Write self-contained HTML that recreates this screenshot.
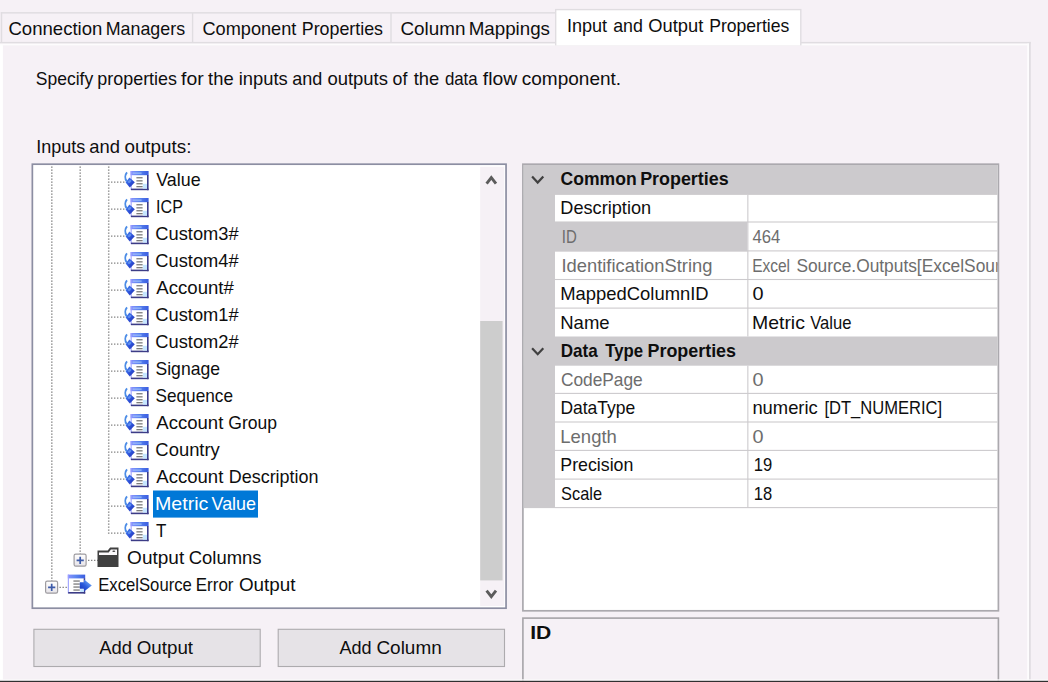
<!DOCTYPE html>
<html><head><meta charset="utf-8"><title>Advanced Editor</title>
<style>
html,body{margin:0;padding:0;background:#F6F1F6;overflow:hidden}
svg{display:block;font-family:"Liberation Sans",sans-serif}
</style></head><body>
<svg width="1048" height="682" viewBox="0 0 1048 682">
<defs>
<linearGradient id="tb" x1="0" y1="0" x2="1" y2="0"><stop offset="0" stop-color="#8C92FF"/><stop offset="0.45" stop-color="#5C86F0"/><stop offset="1" stop-color="#3A5CE0"/></linearGradient>
<linearGradient id="ar" x1="0" y1="0" x2="1" y2="1"><stop offset="0" stop-color="#4C8CF0"/><stop offset="0.55" stop-color="#2C50D8"/><stop offset="1" stop-color="#2430A8"/></linearGradient>
<linearGradient id="ar2" x1="0" y1="1" x2="1" y2="0"><stop offset="0" stop-color="#1430B8"/><stop offset="0.45" stop-color="#2C5CDC"/><stop offset="0.8" stop-color="#68A0F4"/><stop offset="1" stop-color="#4C88EC"/></linearGradient>
<linearGradient id="pb" x1="0" y1="0" x2="0" y2="1"><stop offset="0" stop-color="#FFFFFF"/><stop offset="1" stop-color="#E6E3E8"/></linearGradient>
<g id="col">
 <rect x="6.6" y="0" width="18" height="19.2" fill="#FFFFFF"/>
 <rect x="6.6" y="0" width="18" height="4.2" fill="url(#tb)"/>
 <rect x="6.6" y="0" width="1.1" height="19" fill="#9CA0FF"/>
 <rect x="23" y="4" width="1.6" height="15.2" fill="#3A3A8A"/>
 <rect x="7" y="17.6" width="17.6" height="1.6" fill="#3C3C86"/>
 <rect x="18.8" y="12.8" width="4.2" height="4.8" fill="#C6E6FF"/>
 <rect x="8.6" y="1.5" width="9" height="1.3" fill="#A4C4FA" opacity="0.8"/>
 <rect x="12.4" y="6.1" width="6.2" height="1.3" fill="#7C7C7C"/>
 <rect x="12.4" y="9.2" width="6.2" height="1.3" fill="#7C7C7C"/>
 <rect x="12.4" y="12.1" width="6.2" height="1.3" fill="#7C7C7C"/>
 <rect x="12.4" y="15.0" width="6.2" height="1.3" fill="#7C7C7C"/>
 <path d="M3.0,1.4 C0.9,3.8 0.7,7.6 2.8,10.4" fill="none" stroke="#4C8CE6" stroke-width="1.9"/>
 <polygon points="5.4,6.5 10.8,11.3 5.8,16.5 1.6,11.4" fill="url(#ar)"/>
 <ellipse cx="5.6" cy="10.4" rx="2.0" ry="1.2" transform="rotate(-35 5.6 10.4)" fill="#6C9CF4" opacity="0.75"/>
</g>
<g id="err">
 <rect x="0" y="0" width="17.4" height="19" fill="#FFFFFF"/>
 <rect x="0" y="0" width="17.4" height="3.8" fill="url(#tb)"/>
 <rect x="0" y="0" width="1.1" height="18.8" fill="#9CA0FF"/>
 <rect x="15.9" y="3.6" width="1.5" height="15.4" fill="#3A3A8A"/>
 <rect x="0.4" y="17.4" width="17" height="1.6" fill="#3C3C86"/>
 <rect x="12.4" y="14.6" width="3.5" height="2.8" fill="#BFE4FF"/>
 <rect x="5.6" y="5.8" width="6.4" height="1.3" fill="#7C7C7C"/>
 <rect x="5.6" y="8.8" width="6.4" height="1.3" fill="#7C7C7C"/>
 <rect x="5.6" y="11.8" width="6.4" height="1.3" fill="#7C7C7C"/>
 <rect x="5.6" y="14.8" width="6.4" height="1.3" fill="#7C7C7C"/>
 <polygon points="12.0,7.6 16.2,7.6 16.2,5.0 24.0,10.9 16.2,16.8 16.2,14.2 12.0,14.2" fill="url(#ar2)"/>
</g>
<g id="plus">
 <rect x="0.5" y="0.5" width="12" height="12" rx="1.6" fill="url(#pb)" stroke="#9E9CA0" stroke-width="1.2"/>
 <path d="M3,6.6 H10.2 M6.6,3 V10.2" stroke="#3D5BA9" stroke-width="1.7" fill="none"/>
</g>
<g id="folder">
 <path d="M0,3.2 L10.2,3.2 L12.6,0 L21,0 L21,19.5 L0,19.5 Z" fill="#404040"/>
 <path d="M1.5,5.0 L11.2,5.0 L13.4,2.0 L19.5,2.0 L19.5,7.6 L1.5,7.6 Z" fill="#FBF9FB"/>
 <ellipse cx="16.3" cy="3.9" rx="1.5" ry="0.8" fill="#404040"/>
</g>
<clipPath id="valclip"><rect x="748" y="165" width="249.6" height="345"/></clipPath>
</defs>
<rect x="0.00" y="0.00" width="1048.00" height="682.00" fill="#F6F1F6"/>
<rect x="0.00" y="45.00" width="2.90" height="635.00" fill="#FFFFFF"/>
<rect x="0.00" y="41.90" width="1030.80" height="1.70" fill="#E0DDE1"/>
<rect x="0.00" y="43.60" width="1029.00" height="1.80" fill="#FDFCFD"/>
<rect x="1027.20" y="43.60" width="1.80" height="636.40" fill="#FDFCFD"/>
<rect x="1029.00" y="41.90" width="1.80" height="638.10" fill="#E0DDE1"/>
<rect x="0.80" y="12.10" width="555.20" height="1.50" fill="#E0DDE1"/>
<rect x="0.80" y="12.10" width="1.40" height="30.40" fill="#E0DDE1"/>
<rect x="191.90" y="13.00" width="1.40" height="29.50" fill="#E0DDE1"/>
<rect x="390.30" y="13.00" width="1.40" height="29.50" fill="#E0DDE1"/>
<rect x="555.00" y="8.90" width="246.50" height="36.50" fill="#E0DDE1"/>
<rect x="556.40" y="10.30" width="243.70" height="35.10" fill="#FFFFFF"/>
<text x="8.46" y="34.80" textLength="93.95" lengthAdjust="spacingAndGlyphs" font-size="18.50" fill="#0E0E0E">Connection</text>
<text x="105.74" y="34.80" textLength="79.31" lengthAdjust="spacingAndGlyphs" font-size="18.50" fill="#0E0E0E">Managers</text>
<text x="202.48" y="34.80" textLength="93.85" lengthAdjust="spacingAndGlyphs" font-size="18.50" fill="#0E0E0E">Component</text>
<text x="301.74" y="34.80" textLength="81.31" lengthAdjust="spacingAndGlyphs" font-size="18.50" fill="#0E0E0E">Properties</text>
<text x="400.44" y="34.80" textLength="64.98" lengthAdjust="spacingAndGlyphs" font-size="18.50" fill="#0E0E0E">Column</text>
<text x="468.66" y="34.80" textLength="81.32" lengthAdjust="spacingAndGlyphs" font-size="18.50" fill="#0E0E0E">Mappings</text>
<text x="566.93" y="31.90" textLength="40.20" lengthAdjust="spacingAndGlyphs" font-size="18.50" fill="#0E0E0E">Input</text>
<text x="613.14" y="31.90" textLength="29.70" lengthAdjust="spacingAndGlyphs" font-size="18.50" fill="#0E0E0E">and</text>
<text x="648.33" y="31.90" textLength="55.00" lengthAdjust="spacingAndGlyphs" font-size="18.50" fill="#0E0E0E">Output</text>
<text x="709.16" y="31.90" textLength="80.18" lengthAdjust="spacingAndGlyphs" font-size="18.50" fill="#0E0E0E">Properties</text>
<text x="35.81" y="84.60" textLength="57.33" lengthAdjust="spacingAndGlyphs" font-size="18.50" fill="#0E0E0E">Specify</text>
<text x="97.35" y="84.60" textLength="79.60" lengthAdjust="spacingAndGlyphs" font-size="18.50" fill="#0E0E0E">properties</text>
<text x="181.03" y="84.60" textLength="22.60" lengthAdjust="spacingAndGlyphs" font-size="18.50" fill="#0E0E0E">for</text>
<text x="208.12" y="84.60" textLength="25.49" lengthAdjust="spacingAndGlyphs" font-size="18.50" fill="#0E0E0E">the</text>
<text x="238.77" y="84.60" textLength="48.99" lengthAdjust="spacingAndGlyphs" font-size="18.50" fill="#0E0E0E">inputs</text>
<text x="292.34" y="84.60" textLength="30.02" lengthAdjust="spacingAndGlyphs" font-size="18.50" fill="#0E0E0E">and</text>
<text x="327.42" y="84.60" textLength="60.54" lengthAdjust="spacingAndGlyphs" font-size="18.50" fill="#0E0E0E">outputs</text>
<text x="392.55" y="84.60" textLength="14.82" lengthAdjust="spacingAndGlyphs" font-size="18.50" fill="#0E0E0E">of</text>
<text x="413.72" y="84.60" textLength="25.49" lengthAdjust="spacingAndGlyphs" font-size="18.50" fill="#0E0E0E">the</text>
<text x="444.89" y="84.60" textLength="32.81" lengthAdjust="spacingAndGlyphs" font-size="18.50" fill="#0E0E0E">data</text>
<text x="482.83" y="84.60" textLength="34.33" lengthAdjust="spacingAndGlyphs" font-size="18.50" fill="#0E0E0E">flow</text>
<text x="521.79" y="84.60" textLength="99.34" lengthAdjust="spacingAndGlyphs" font-size="18.50" fill="#0E0E0E">component.</text>
<text x="36.34" y="153.10" textLength="49.01" lengthAdjust="spacingAndGlyphs" font-size="18.50" fill="#0E0E0E">Inputs</text>
<text x="89.32" y="153.10" textLength="30.67" lengthAdjust="spacingAndGlyphs" font-size="18.50" fill="#0E0E0E">and</text>
<text x="124.41" y="153.10" textLength="67.01" lengthAdjust="spacingAndGlyphs" font-size="18.50" fill="#0E0E0E">outputs:</text>
<rect x="32.35" y="164.2" width="473.7" height="444.0" fill="#FFFFFF" stroke="#8C8EA2" stroke-width="1.7"/>
<rect x="480.20" y="166.80" width="24.00" height="439.20" fill="#F6F1F6"/>
<rect x="480.20" y="321.00" width="22.40" height="259.40" fill="#CDCDCD"/>
<path d="M486.6,183.6 L491.3,177.6 L496,183.6" fill="none" stroke="#5C5C5C" stroke-width="2.9"/>
<path d="M486.6,590.6 L491.3,596.6 L496,590.6" fill="none" stroke="#5C5C5C" stroke-width="2.9"/>
<line x1="51.80" y1="166.40" x2="51.80" y2="581.00" stroke="#848484" stroke-width="1.50" stroke-dasharray="1.3 1.7"/>
<line x1="80.20" y1="166.40" x2="80.20" y2="554.00" stroke="#848484" stroke-width="1.50" stroke-dasharray="1.3 1.7"/>
<line x1="108.70" y1="166.40" x2="108.70" y2="534.20" stroke="#848484" stroke-width="1.50" stroke-dasharray="1.3 1.7"/>
<line x1="111.00" y1="182.10" x2="124.60" y2="182.10" stroke="#848484" stroke-width="1.30" stroke-dasharray="1.4 1.6"/>
<use href="#col" x="124" y="171.00"/>
<text x="156.22" y="186.00" textLength="44.35" lengthAdjust="spacingAndGlyphs" font-size="18.50" fill="#0E0E0E">Value</text>
<line x1="111.00" y1="209.10" x2="124.60" y2="209.10" stroke="#848484" stroke-width="1.30" stroke-dasharray="1.4 1.6"/>
<use href="#col" x="124" y="198.00"/>
<text x="156.11" y="213.00" textLength="26.83" lengthAdjust="spacingAndGlyphs" font-size="18.50" fill="#0E0E0E">ICP</text>
<line x1="111.00" y1="236.10" x2="124.60" y2="236.10" stroke="#848484" stroke-width="1.30" stroke-dasharray="1.4 1.6"/>
<use href="#col" x="124" y="225.00"/>
<text x="155.37" y="240.00" textLength="83.32" lengthAdjust="spacingAndGlyphs" font-size="18.50" fill="#0E0E0E">Custom3#</text>
<line x1="111.00" y1="263.10" x2="124.60" y2="263.10" stroke="#848484" stroke-width="1.30" stroke-dasharray="1.4 1.6"/>
<use href="#col" x="124" y="252.00"/>
<text x="155.37" y="267.00" textLength="83.32" lengthAdjust="spacingAndGlyphs" font-size="18.50" fill="#0E0E0E">Custom4#</text>
<line x1="111.00" y1="290.10" x2="124.60" y2="290.10" stroke="#848484" stroke-width="1.30" stroke-dasharray="1.4 1.6"/>
<use href="#col" x="124" y="279.00"/>
<text x="156.26" y="294.00" textLength="77.63" lengthAdjust="spacingAndGlyphs" font-size="18.50" fill="#0E0E0E">Account#</text>
<line x1="111.00" y1="317.10" x2="124.60" y2="317.10" stroke="#848484" stroke-width="1.30" stroke-dasharray="1.4 1.6"/>
<use href="#col" x="124" y="306.00"/>
<text x="155.37" y="321.00" textLength="83.32" lengthAdjust="spacingAndGlyphs" font-size="18.50" fill="#0E0E0E">Custom1#</text>
<line x1="111.00" y1="344.10" x2="124.60" y2="344.10" stroke="#848484" stroke-width="1.30" stroke-dasharray="1.4 1.6"/>
<use href="#col" x="124" y="333.00"/>
<text x="155.37" y="348.00" textLength="83.32" lengthAdjust="spacingAndGlyphs" font-size="18.50" fill="#0E0E0E">Custom2#</text>
<line x1="111.00" y1="371.10" x2="124.60" y2="371.10" stroke="#848484" stroke-width="1.30" stroke-dasharray="1.4 1.6"/>
<use href="#col" x="124" y="360.00"/>
<text x="155.50" y="375.00" textLength="64.48" lengthAdjust="spacingAndGlyphs" font-size="18.50" fill="#0E0E0E">Signage</text>
<line x1="111.00" y1="398.10" x2="124.60" y2="398.10" stroke="#848484" stroke-width="1.30" stroke-dasharray="1.4 1.6"/>
<use href="#col" x="124" y="387.00"/>
<text x="155.52" y="402.00" textLength="77.44" lengthAdjust="spacingAndGlyphs" font-size="18.50" fill="#0E0E0E">Sequence</text>
<line x1="111.00" y1="425.10" x2="124.60" y2="425.10" stroke="#848484" stroke-width="1.30" stroke-dasharray="1.4 1.6"/>
<use href="#col" x="124" y="414.00"/>
<text x="156.26" y="429.00" textLength="67.07" lengthAdjust="spacingAndGlyphs" font-size="18.50" fill="#0E0E0E">Account</text>
<text x="228.32" y="429.00" textLength="48.72" lengthAdjust="spacingAndGlyphs" font-size="18.50" fill="#0E0E0E">Group</text>
<line x1="111.00" y1="452.10" x2="124.60" y2="452.10" stroke="#848484" stroke-width="1.30" stroke-dasharray="1.4 1.6"/>
<use href="#col" x="124" y="441.00"/>
<text x="155.36" y="456.00" textLength="64.47" lengthAdjust="spacingAndGlyphs" font-size="18.50" fill="#0E0E0E">Country</text>
<line x1="111.00" y1="479.10" x2="124.60" y2="479.10" stroke="#848484" stroke-width="1.30" stroke-dasharray="1.4 1.6"/>
<use href="#col" x="124" y="468.00"/>
<text x="156.26" y="483.00" textLength="67.07" lengthAdjust="spacingAndGlyphs" font-size="18.50" fill="#0E0E0E">Account</text>
<text x="228.73" y="483.00" textLength="89.84" lengthAdjust="spacingAndGlyphs" font-size="18.50" fill="#0E0E0E">Description</text>
<line x1="111.00" y1="506.10" x2="124.60" y2="506.10" stroke="#848484" stroke-width="1.30" stroke-dasharray="1.4 1.6"/>
<use href="#col" x="124" y="495.00"/>
<rect x="153.00" y="490.50" width="105.00" height="27.10" fill="#0078D7"/>
<text x="154.99" y="510.00" textLength="53.32" lengthAdjust="spacingAndGlyphs" font-size="18.50" fill="#FFFFFF">Metric</text>
<text x="211.52" y="510.00" textLength="44.55" lengthAdjust="spacingAndGlyphs" font-size="18.50" fill="#FFFFFF">Value</text>
<line x1="111.00" y1="533.10" x2="124.60" y2="533.10" stroke="#848484" stroke-width="1.30" stroke-dasharray="1.4 1.6"/>
<use href="#col" x="124" y="522.00"/>
<text x="156.02" y="537.00" textLength="10.37" lengthAdjust="spacingAndGlyphs" font-size="18.50" fill="#0E0E0E">T</text>
<line x1="88.00" y1="560.30" x2="98.00" y2="560.30" stroke="#848484" stroke-width="1.30" stroke-dasharray="1.4 1.6"/>
<use href="#plus" x="73.6" y="553.7"/>
<use href="#folder" x="97.5" y="547.4"/>
<text x="127.10" y="563.90" textLength="57.14" lengthAdjust="spacingAndGlyphs" font-size="18.50" fill="#0E0E0E">Output</text>
<text x="188.76" y="563.90" textLength="72.80" lengthAdjust="spacingAndGlyphs" font-size="18.50" fill="#0E0E0E">Columns</text>
<line x1="59.50" y1="587.30" x2="68.00" y2="587.30" stroke="#848484" stroke-width="1.30" stroke-dasharray="1.4 1.6"/>
<use href="#plus" x="45.1" y="580.7"/>
<use href="#err" x="67.8" y="574.6"/>
<text x="98.23" y="590.90" textLength="93.61" lengthAdjust="spacingAndGlyphs" font-size="18.50" fill="#0E0E0E">ExcelSource</text>
<text x="195.81" y="590.90" textLength="37.67" lengthAdjust="spacingAndGlyphs" font-size="18.50" fill="#0E0E0E">Error</text>
<text x="238.91" y="590.90" textLength="56.63" lengthAdjust="spacingAndGlyphs" font-size="18.50" fill="#0E0E0E">Output</text>
<rect x="33.9" y="629.3" width="226.3" height="37.2" fill="#E6E3E7" stroke="#ADABAE" stroke-width="1.1"/>
<rect x="278.2" y="629.3" width="226.3" height="37.2" fill="#E6E3E7" stroke="#ADABAE" stroke-width="1.1"/>
<text x="99.36" y="654.10" textLength="32.72" lengthAdjust="spacingAndGlyphs" font-size="18.50" fill="#0E0E0E">Add</text>
<text x="136.71" y="654.10" textLength="56.33" lengthAdjust="spacingAndGlyphs" font-size="18.50" fill="#0E0E0E">Output</text>
<text x="339.46" y="654.10" textLength="32.10" lengthAdjust="spacingAndGlyphs" font-size="18.50" fill="#0E0E0E">Add</text>
<text x="376.44" y="654.10" textLength="65.29" lengthAdjust="spacingAndGlyphs" font-size="18.50" fill="#0E0E0E">Column</text>
<rect x="522.9" y="164.2" width="475.5" height="446.6" fill="#FFFFFF" stroke="#ABA9AE" stroke-width="1.7"/>
<rect x="523.80" y="165.00" width="31.20" height="343.10" fill="#CCCACD"/>
<rect x="523.80" y="165.00" width="473.80" height="29.90" fill="#CCCACD"/>
<rect x="523.80" y="336.50" width="473.80" height="29.20" fill="#CCCACD"/>
<rect x="555.00" y="222.00" width="192.30" height="29.40" fill="#CCCACD"/>
<rect x="555.00" y="221.45" width="442.60" height="1.10" fill="#CCCACD"/>
<rect x="555.00" y="250.35" width="442.60" height="1.10" fill="#CCCACD"/>
<rect x="555.00" y="278.95" width="442.60" height="1.10" fill="#CCCACD"/>
<rect x="555.00" y="307.55" width="442.60" height="1.10" fill="#CCCACD"/>
<rect x="555.00" y="392.85" width="442.60" height="1.10" fill="#CCCACD"/>
<rect x="555.00" y="421.45" width="442.60" height="1.10" fill="#CCCACD"/>
<rect x="555.00" y="449.85" width="442.60" height="1.10" fill="#CCCACD"/>
<rect x="555.00" y="478.55" width="442.60" height="1.10" fill="#CCCACD"/>
<rect x="555.00" y="507.05" width="442.60" height="1.10" fill="#CCCACD"/>
<rect x="747.30" y="194.90" width="1.10" height="141.60" fill="#CCCACD"/>
<rect x="747.30" y="365.70" width="1.10" height="141.90" fill="#CCCACD"/>
<path d="M532.1,176.60 L537.7,182.60 L543.3,176.60" fill="none" stroke="#404040" stroke-width="2.2"/>
<path d="M532.1,348.20 L537.7,354.20 L543.3,348.20" fill="none" stroke="#404040" stroke-width="2.2"/>
<text x="560.58" y="185.30" textLength="76.11" lengthAdjust="spacingAndGlyphs" font-size="18.50" fill="#0E0E0E" font-weight="bold">Common</text>
<text x="640.20" y="185.30" textLength="88.43" lengthAdjust="spacingAndGlyphs" font-size="18.50" fill="#0E0E0E" font-weight="bold">Properties</text>
<text x="560.31" y="214.40" textLength="90.87" lengthAdjust="spacingAndGlyphs" font-size="18.50" fill="#0E0E0E">Description</text>
<text x="561.82" y="242.90" textLength="15.00" lengthAdjust="spacingAndGlyphs" font-size="18.50" fill="#6D6D6D">ID</text>
<text x="752.52" y="242.90" textLength="27.87" lengthAdjust="spacingAndGlyphs" font-size="18.50" fill="#6D6D6D">464</text>
<text x="561.51" y="271.80" textLength="150.87" lengthAdjust="spacingAndGlyphs" font-size="18.50" fill="#6D6D6D">IdentificationString</text>
<text x="752.13" y="271.80" textLength="37.91" lengthAdjust="spacingAndGlyphs" font-size="18.50" fill="#6D6D6D" clip-path="url(#valclip)">Excel</text>
<text x="796.41" y="271.80" textLength="222.62" lengthAdjust="spacingAndGlyphs" font-size="18.50" fill="#6D6D6D" clip-path="url(#valclip)">Source.Outputs[ExcelSource</text>
<text x="560.29" y="300.40" textLength="148.39" lengthAdjust="spacingAndGlyphs" font-size="18.50" fill="#0E0E0E">MappedColumnID</text>
<text x="752.42" y="300.40" textLength="11.05" lengthAdjust="spacingAndGlyphs" font-size="18.50" fill="#0E0E0E">0</text>
<text x="560.28" y="329.00" textLength="49.34" lengthAdjust="spacingAndGlyphs" font-size="18.50" fill="#0E0E0E">Name</text>
<text x="752.01" y="329.00" textLength="52.91" lengthAdjust="spacingAndGlyphs" font-size="18.50" fill="#0E0E0E">Metric</text>
<text x="810.23" y="329.00" textLength="41.29" lengthAdjust="spacingAndGlyphs" font-size="18.50" fill="#0E0E0E">Value</text>
<text x="560.76" y="357.40" textLength="37.03" lengthAdjust="spacingAndGlyphs" font-size="18.50" fill="#0E0E0E" font-weight="bold">Data</text>
<text x="605.22" y="357.40" textLength="37.84" lengthAdjust="spacingAndGlyphs" font-size="18.50" fill="#0E0E0E" font-weight="bold">Type</text>
<text x="647.50" y="357.40" textLength="88.53" lengthAdjust="spacingAndGlyphs" font-size="18.50" fill="#0E0E0E" font-weight="bold">Properties</text>
<text x="560.92" y="386.10" textLength="81.85" lengthAdjust="spacingAndGlyphs" font-size="18.50" fill="#6D6D6D">CodePage</text>
<text x="752.42" y="386.10" textLength="11.05" lengthAdjust="spacingAndGlyphs" font-size="18.50" fill="#6D6D6D">0</text>
<text x="560.38" y="414.30" textLength="74.88" lengthAdjust="spacingAndGlyphs" font-size="18.50" fill="#0E0E0E">DataType</text>
<text x="752.38" y="414.30" textLength="65.41" lengthAdjust="spacingAndGlyphs" font-size="18.50" fill="#0E0E0E">numeric</text>
<text x="824.42" y="414.30" textLength="117.76" lengthAdjust="spacingAndGlyphs" font-size="18.50" fill="#0E0E0E">[DT_NUMERIC]</text>
<text x="560.28" y="442.90" textLength="56.62" lengthAdjust="spacingAndGlyphs" font-size="18.50" fill="#6D6D6D">Length</text>
<text x="752.42" y="442.90" textLength="11.05" lengthAdjust="spacingAndGlyphs" font-size="18.50" fill="#6D6D6D">0</text>
<text x="560.34" y="471.30" textLength="73.01" lengthAdjust="spacingAndGlyphs" font-size="18.50" fill="#0E0E0E">Precision</text>
<text x="753.74" y="471.30" textLength="18.45" lengthAdjust="spacingAndGlyphs" font-size="18.50" fill="#0E0E0E">19</text>
<text x="561.06" y="500.00" textLength="40.97" lengthAdjust="spacingAndGlyphs" font-size="18.50" fill="#0E0E0E">Scale</text>
<text x="753.74" y="500.00" textLength="18.38" lengthAdjust="spacingAndGlyphs" font-size="18.50" fill="#0E0E0E">18</text>
<rect x="522.9" y="618.1" width="475.5" height="70" fill="#F6F1F6" stroke="#A6A4A8" stroke-width="1.6"/>
<text x="530.19" y="639.30" textLength="21.10" lengthAdjust="spacingAndGlyphs" font-size="18.50" fill="#0E0E0E" font-weight="bold">ID</text>
<rect x="0.00" y="679.30" width="1048.00" height="1.50" fill="#FBF9FB"/>
<rect x="0.00" y="680.80" width="1048.00" height="1.20" fill="#303030"/>
</svg>
</body></html>
